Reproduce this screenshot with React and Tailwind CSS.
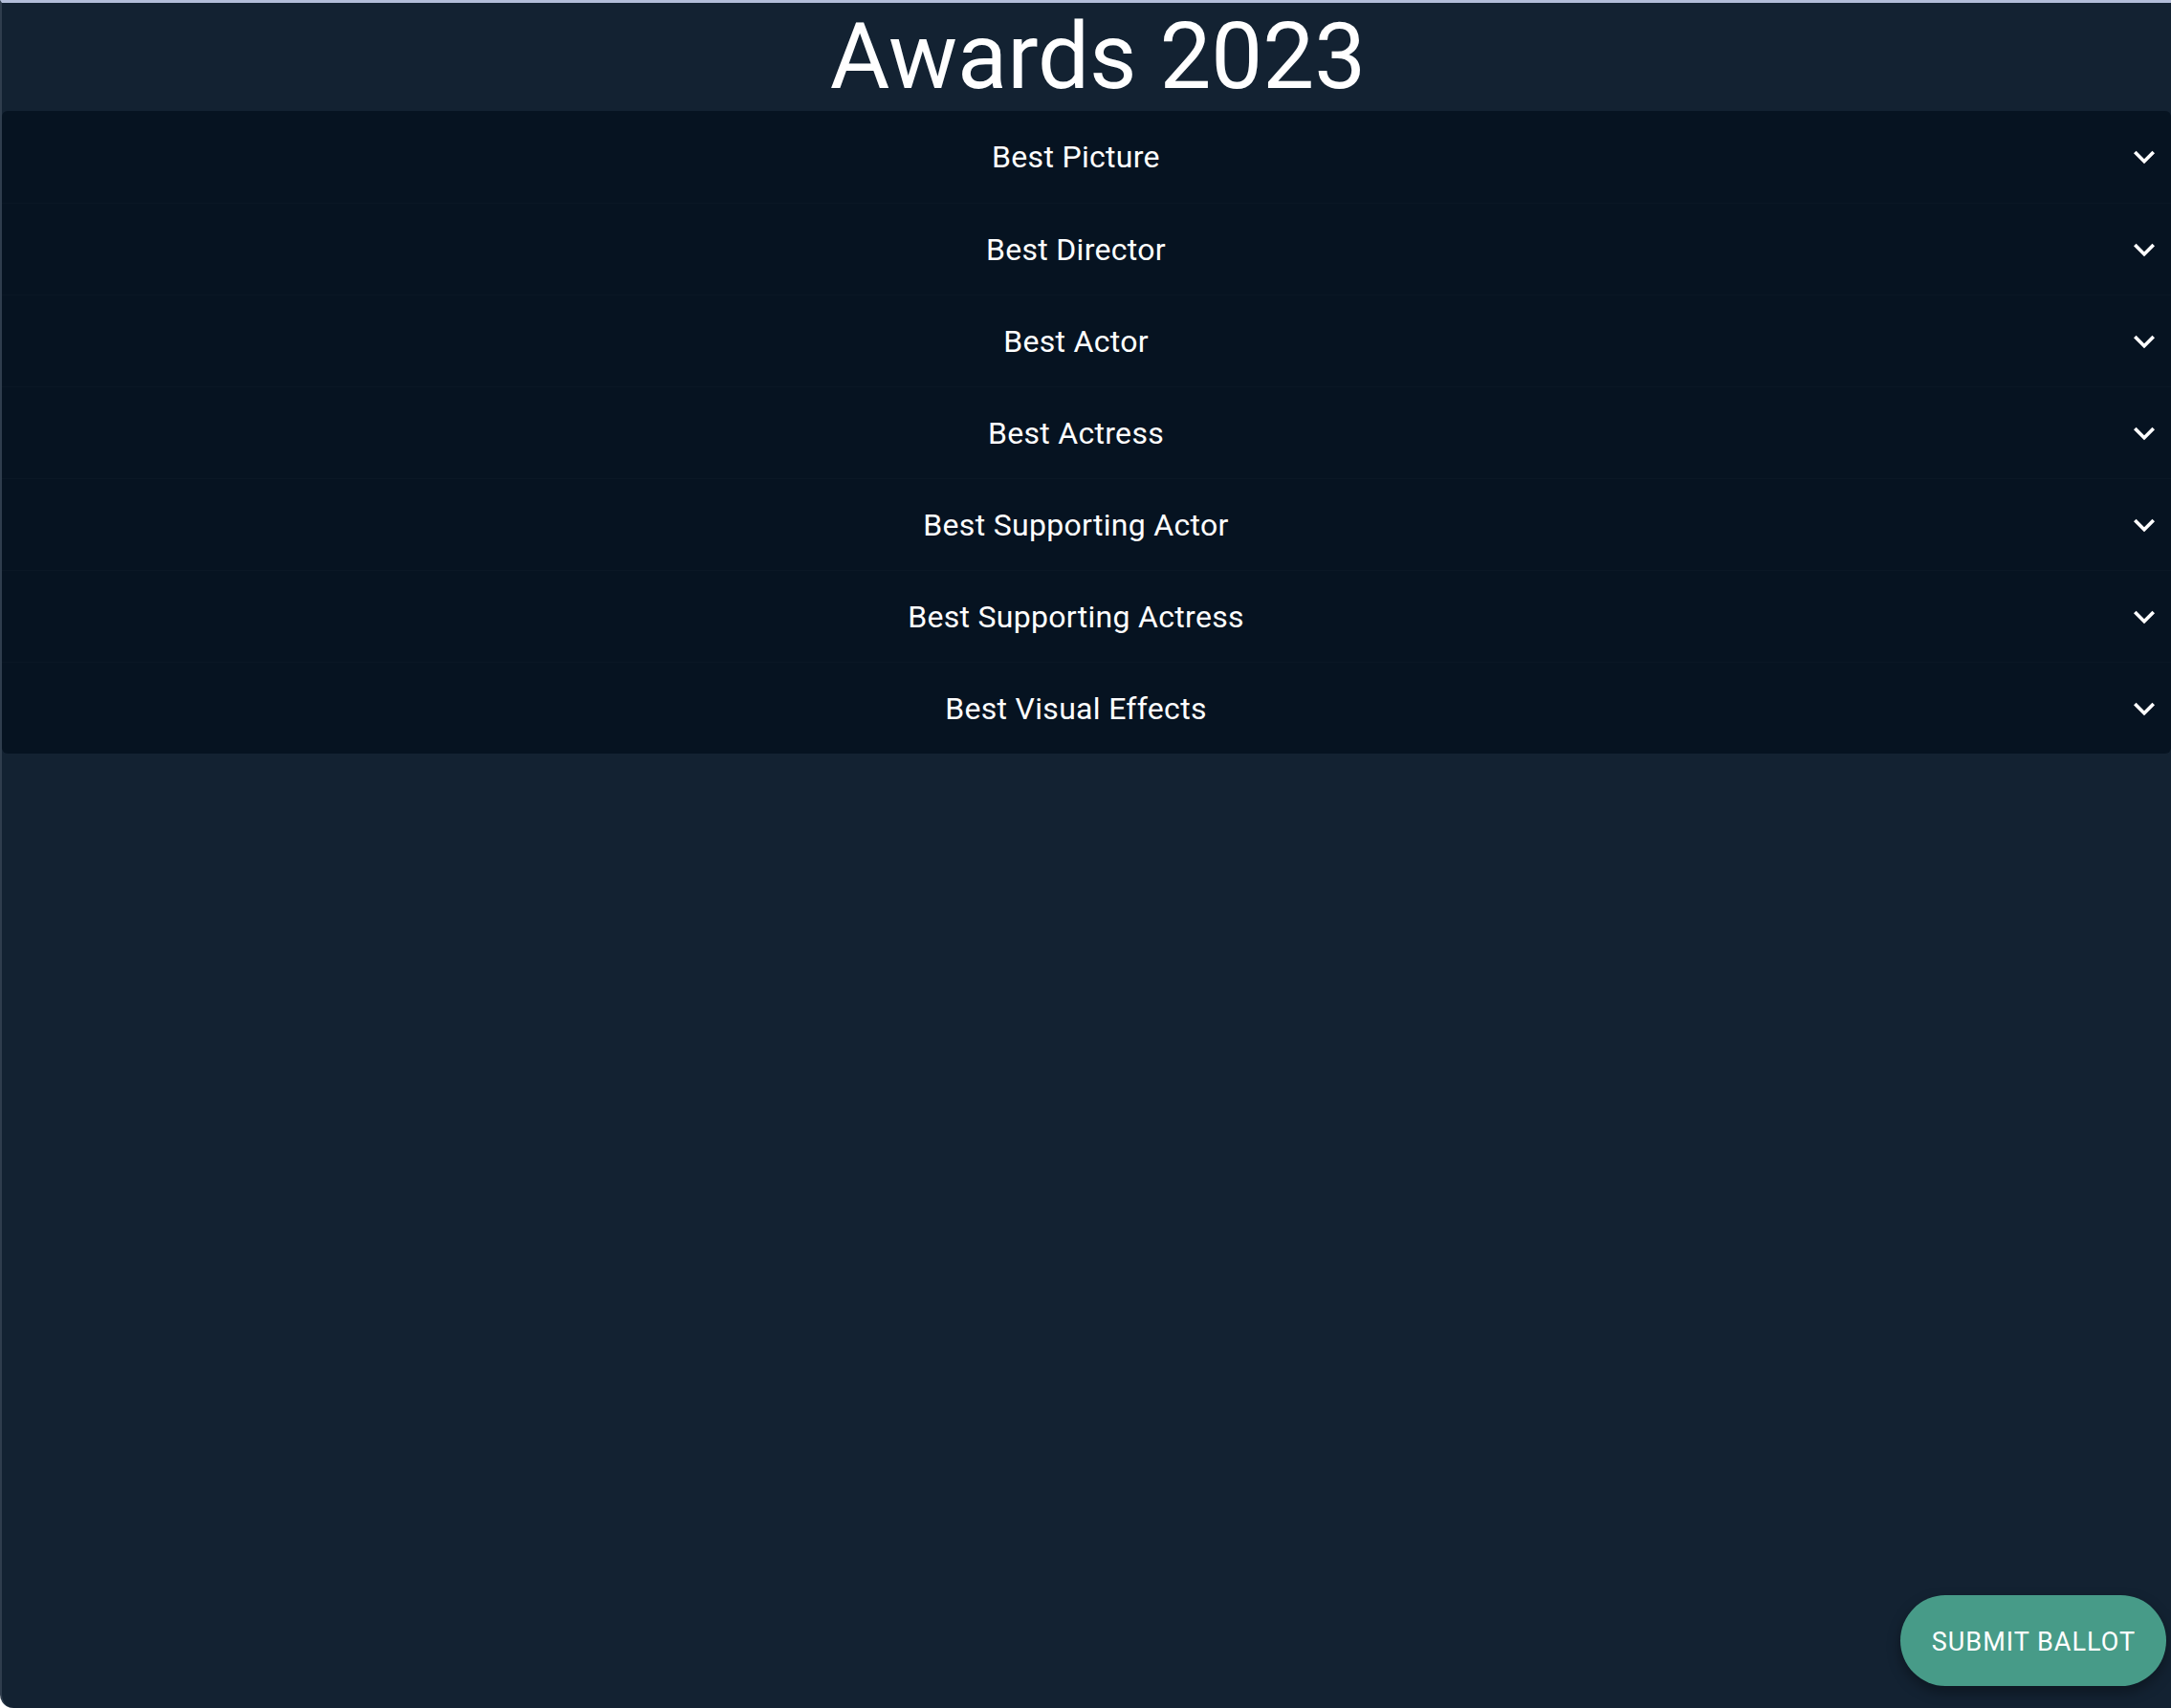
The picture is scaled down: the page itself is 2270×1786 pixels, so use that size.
import React, { useState } from 'react';

const categories = [
  'Best Picture',
  'Best Director',
  'Best Actor',
  'Best Actress',
  'Best Supporting Actor',
  'Best Supporting Actress',
  'Best Visual Effects',
];

const ExpandIcon = ({ open }) => (
  <svg
    viewBox="0 0 24 24"
    className={open ? 'w-[44px] h-[44px] rotate-180' : 'w-[44px] h-[44px]'}
    fill="#ffffff"
  >
    <path d="M16.59 8.59 12 13.17 7.41 8.59 6 10l6 6 6-6z" />
  </svg>
);

const App = () => {
  const [openIndex, setOpenIndex] = useState(null);

  return (
    <div
      className="relative min-h-screen h-[1786px] flex flex-col bg-[#132232] border-t-[3px] border-t-[#b3bed9] border-l-2 border-l-[#2f3d4d] rounded-bl-[14px] text-white"
      style={{ fontFamily: 'Roboto, "Liberation Sans", sans-serif' }}
    >
      <h1 className="h-[113px] flex items-center justify-center text-[96px] leading-[113px] font-normal pl-[24px]">
        Awards 2023
      </h1>

      <div className="flex flex-col bg-[#061321] rounded-[6px] overflow-hidden">
        {categories.map((name, i) => (
          <div
            key={name}
            className={
              i === 0
                ? 'h-[96px] flex items-center pl-[28px] pr-[6px] cursor-pointer'
                : 'h-[96px] flex items-center pl-[28px] pr-[6px] cursor-pointer border-t border-[#0a1725]'
            }
            onClick={() => setOpenIndex(openIndex === i ? null : i)}
          >
            <p className="flex-1 text-center text-[32px] tracking-[0.3px]">{name}</p>
            <ExpandIcon open={openIndex === i} />
          </div>
        ))}
      </div>

      <button className="absolute bottom-[23px] right-[5px] h-[95px] pl-[33px] pr-[32px] pt-[3px] rounded-full bg-[#479b88] text-white text-[27px] tracking-[1px] uppercase shadow-[0_6px_14px_rgba(0,0,0,0.35)]">
        Submit Ballot
      </button>
    </div>
  );
};

export default App;
